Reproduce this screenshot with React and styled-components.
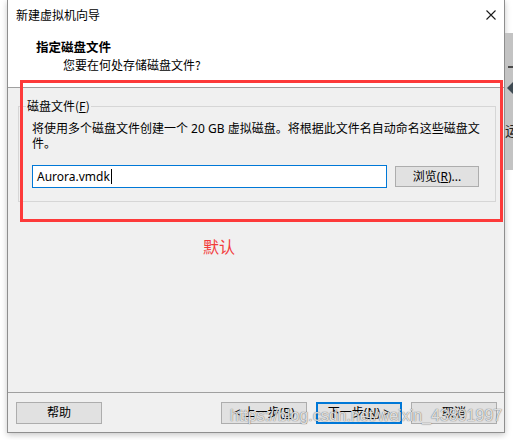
import React from "react";
import styled, { createGlobalStyle } from "styled-components";

const GlobalStyle = createGlobalStyle`
  html, body {
    margin: 0;
    padding: 0;
    background: #ffffff;
  }
  body {
    font-family: "Noto Sans", "Noto Sans CJK SC", sans-serif;
    font-size: 12px;
    color: #000;
  }
`;

function App() {
  return (
    <>
      <GlobalStyle />
      <Page>
        <Gutter />
        <Window>
          <TitleBar>
            <TitleText>新建虚拟机向导</TitleText>
            <CloseIcon viewBox="0 0 10 10" aria-label="关闭">
              <path d="M0.5 0.5 L9.5 9.5 M9.5 0.5 L0.5 9.5" />
            </CloseIcon>
          </TitleBar>
          <Header>
            <HeaderTitle>指定磁盘文件</HeaderTitle>
            <HeaderSub>您要在何处存储磁盘文件?</HeaderSub>
          </Header>
          <Body>
            <GroupBox>
              <Legend>
                磁盘文件(<u>F</u>)
              </Legend>
              <Description>
                将使用多个磁盘文件创建一个 20 GB 虚拟磁盘。将根据此文件名自动命名这些磁盘文
                <br />
                件。
              </Description>
              <FileRow>
                <TextBox>
                  Aurora.vmdk
                  <Caret />
                </TextBox>
                <Button $width={84} $height={21}>
                  浏览(<u>R</u>)...
                </Button>
              </FileRow>
            </GroupBox>
            <Note>默认</Note>
          </Body>
          <Footer>
            <Button>帮助</Button>
            <FooterRight>
              <Button>
                &lt; 上一步(<u>B</u>)
              </Button>
              <Button $primary>
                下一步(<u>N</u>) &gt;
              </Button>
              <Button>取消</Button>
            </FooterRight>
          </Footer>
          <Highlight />
          <Watermark>https://blog.csdn.net/weixin_43891997</Watermark>
        </Window>
        <DesktopSliver>
          <SliverPanel>
            <SliverIcon viewBox="0 0 8 70">
              <rect x="3" y="33" width="5" height="2" fill="#4a4a4a" />
              <path d="M2 55 L8 49 L8 61 Z" fill="#3e4a52" />
            </SliverIcon>
            <SliverText>运</SliverText>
          </SliverPanel>
        </DesktopSliver>
      </Page>
    </>
  );
}

export default App;

const Page = styled.div`
  display: flex;
  height: 440px;
  overflow: hidden;
`;

const Gutter = styled.div`
  width: 7px;
  flex-shrink: 0;
`;

const Window = styled.div`
  position: relative;
  width: 498px;
  height: 433px;
  box-sizing: border-box;
  flex-shrink: 0;
  display: flex;
  flex-direction: column;
  border: 1px solid #8e8e8e;
  border-top: none;
  box-shadow: 0 2px 6px rgba(0, 0, 0, 0.22);
  background: #f0f0f0;
`;

const TitleBar = styled.div`
  height: 30px;
  display: flex;
  align-items: center;
  justify-content: space-between;
  padding: 0 8px;
  background: #fff;
`;

const TitleText = styled.span`
  font-family: "Noto Sans CJK SC", sans-serif;
  font-size: 12px;
  line-height: 16px;
`;

const CloseIcon = styled.svg`
  width: 10px;
  height: 10px;
  stroke: #1a1a1a;
  stroke-width: 1.1;
  fill: none;
`;

const Header = styled.div`
  height: 57px;
  background: #fff;
  border-bottom: 1px solid #a0a0a0;
  padding-left: 28px;
  font-family: "Noto Sans CJK SC", sans-serif;
`;

const HeaderTitle = styled.div`
  font-size: 12.5px;
  font-weight: 700;
  line-height: 16px;
  margin-top: 9px;
`;

const HeaderSub = styled.div`
  font-size: 12px;
  line-height: 16px;
  margin-top: 2px;
  padding-left: 27px;
`;

const Body = styled.div`
  flex: 1;
  padding: 10px 8px 0 10px;
  background: #f0f0f0;
`;

const GroupBox = styled.fieldset`
  margin: 0;
  padding: 0 13px 13px 13px;
  border: 1px solid #d6d6d6;
  min-width: 0;
`;

const Legend = styled.legend`
  margin-left: -6px;
  padding: 0 1px;
  font-family: "Noto Sans CJK SC", sans-serif;
  font-size: 12px;
  line-height: 16px;

  u {
    text-underline-offset: 1px;
  }
`;

const Description = styled.p`
  margin: 7px 0 0;
  font-family: "Noto Sans", "Noto Sans CJK SC", sans-serif;
  font-size: 12px;
  line-height: 15px;
  white-space: nowrap;
`;

const FileRow = styled.div`
  display: flex;
  align-items: center;
  margin-top: 14px;
  gap: 8px;
`;

const TextBox = styled.div`
  width: 355px;
  height: 23px;
  box-sizing: border-box;
  border: 1px solid #0078d7;
  background: #fff;
  display: flex;
  align-items: center;
  padding-left: 4px;
  font-size: 12px;
`;

const Caret = styled.span`
  display: inline-block;
  width: 1px;
  height: 15px;
  background: #000;
  margin-left: 1px;
`;

const Button = styled.div`
  width: ${(p) => p.$width || 86}px;
  height: ${(p) => p.$height || 22}px;
  box-sizing: border-box;
  display: flex;
  align-items: center;
  justify-content: center;
  background: #e1e1e1;
  border: 1px solid ${(p) => (p.$primary ? "#0078d7" : "#adadad")};
  box-shadow: ${(p) => (p.$primary ? "inset 0 0 0 1px #0078d7" : "none")};
  font-family: "Noto Sans", "Noto Sans CJK SC", sans-serif;
  font-size: 12px;
  line-height: 16px;
  white-space: pre;
  flex-shrink: 0;

  u {
    text-underline-offset: 1px;
  }
`;

const Note = styled.div`
  margin: 36px 0 0 185px;
  font-family: "Noto Sans CJK SC", sans-serif;
  font-size: 16px;
  line-height: 16px;
  color: #f23b3b;
`;

const Footer = styled.div`
  height: 40px;
  box-sizing: border-box;
  border-top: 1px solid #a0a0a0;
  padding: 9px 7px 0 8px;
  display: flex;
  justify-content: space-between;
  align-items: flex-start;
  background: #f0f0f0;
`;

const FooterRight = styled.div`
  display: flex;
  gap: 9px;
`;

const Highlight = styled.div`
  position: absolute;
  left: 12px;
  top: 80px;
  width: 483px;
  height: 142px;
  box-sizing: border-box;
  border: 3px solid #fd3a3a;
  pointer-events: none;
`;

const Watermark = styled.div`
  position: absolute;
  left: 222px;
  top: 408px;
  font-family: "Liberation Sans", Arial, sans-serif;
  font-size: 16px;
  line-height: 16px;
  color: rgba(255, 255, 255, 0.8);
  text-shadow: 0 0 1px rgba(70, 70, 70, 0.7), 0 0 1px rgba(70, 70, 70, 0.5);
  white-space: nowrap;
  pointer-events: none;
`;

const DesktopSliver = styled.div`
  flex: 1;
  padding-top: 33px;
  overflow: hidden;
`;

const SliverPanel = styled.div`
  position: relative;
  height: 137px;
  background: #c3c3c3;
  overflow: hidden;
`;

const SliverIcon = styled.svg`
  display: block;
  width: 8px;
  height: 70px;
`;

const SliverText = styled.div`
  font-family: "Noto Sans CJK SC", sans-serif;
  font-size: 14px;
  line-height: 16px;
  margin-top: 19px;
  color: #222;
  white-space: nowrap;
`;
